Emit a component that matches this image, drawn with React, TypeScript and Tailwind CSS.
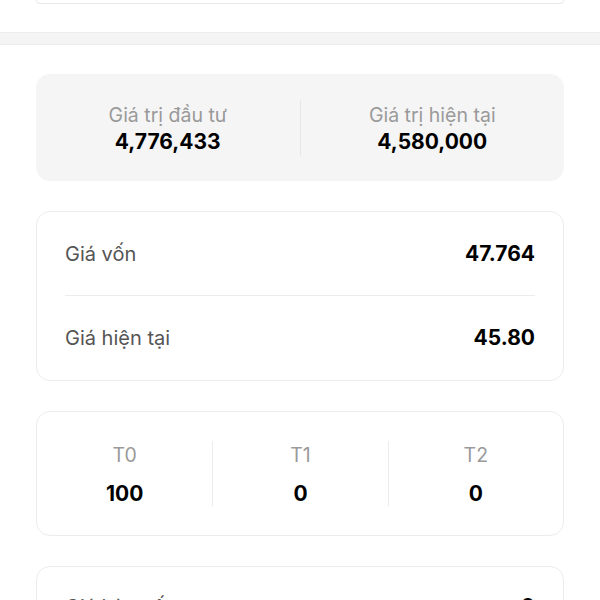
const font = { fontFamily: 'Inter, "Noto Sans", sans-serif' }

function Divider() {
  return <div className="w-px self-stretch bg-[#ececec]" />
}

export default function App() {
  return (
    <div className="min-h-[600px] w-[600px] overflow-hidden bg-white text-black" style={font}>
      {/* bottom edge of previous card */}
      <div className="mx-[36px] h-[4px] rounded-b-[14px] border-x border-b border-[#e9e9e9]" />
      <div className="mt-[28px] h-[13px] border-y border-[#ededed] bg-[#f4f4f4]" />

      <div className="mx-[36px] mt-[29px] flex flex-col gap-[30px]">
        <div className="flex h-[107px] items-center rounded-[14px] bg-[#f5f5f5]">
          <div className="flex flex-1 flex-col items-center pt-[2px]">
            <span className="text-[19.5px] leading-[26px] text-[#9a9a9a]">Giá trị đầu tư</span>
            <span className="text-[21px] font-bold leading-[28px]">4,776,433</span>
          </div>
          <div className="h-[56px] w-px bg-[#e6e6e6]" />
          <div className="flex flex-1 flex-col items-center pt-[2px]">
            <span className="text-[19.5px] leading-[26px] text-[#9a9a9a]">Giá trị hiện tại</span>
            <span className="text-[21px] font-bold leading-[28px]">4,580,000</span>
          </div>
        </div>

        <div className="rounded-[14px] border border-[#ececec] px-[28px]">
          <div className="flex h-[84px] items-center justify-between border-b border-[#ececec]">
            <span className="text-[20px] text-[#555]">Giá vốn</span>
            <span className="text-[21px] font-bold">47.764</span>
          </div>
          <div className="flex h-[84px] items-center justify-between">
            <span className="text-[20px] text-[#555]">Giá hiện tại</span>
            <span className="text-[21px] font-bold">45.80</span>
          </div>
        </div>

        <div className="flex h-[125px] items-center rounded-[14px] border border-[#ececec] py-[29px]">
          {[
            ['T0', '100'],
            ['T1', '0'],
            ['T2', '0'],
          ].map(([label, value], i) => (
            <div key={label} className="flex flex-1 items-stretch self-stretch">
              {i > 0 && <Divider />}
              <div className="flex flex-1 flex-col items-center justify-center gap-[14px] pt-[2px]">
                <span className="text-[19.5px] leading-[24px] text-[#9a9a9a]">{label}</span>
                <span className="text-[21px] font-bold leading-[26px]">{value}</span>
              </div>
            </div>
          ))}
        </div>

        <div className="h-[80px] rounded-[14px] border border-[#ececec] px-[28px] pt-[24px]">
          <div className="flex items-center justify-between">
            <span className="text-[20px] text-[#555]">Giá hòa vốn</span>
            <span className="text-[21px] font-bold">0</span>
          </div>
        </div>
      </div>
    </div>
  )
}
